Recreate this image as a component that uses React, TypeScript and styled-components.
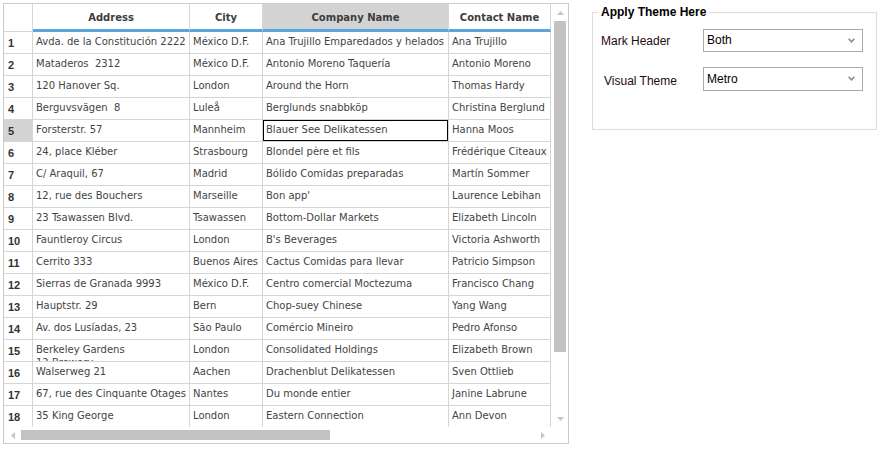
import React from "react";
import styled, { createGlobalStyle, css } from "styled-components";

const GlobalStyle = createGlobalStyle`
  html, body { margin: 0; padding: 0; background: #fff; }
  body { font-family: "DejaVu Sans", Verdana, sans-serif; }
`;

const Page = styled.div`
  display: flex;
  align-items: flex-start;
  gap: 23px;
  padding: 3px 0 0 3px;
  width: 881px;
  height: 449px;
  box-sizing: border-box;
`;

const GridFrame = styled.div`
  display: grid;
  grid-template-columns: 547px 17px;
  grid-template-rows: 423px 16px;
  border: 1px solid #cbcbcb;
  background: #fff;
  flex: none;
`;

const Viewport = styled.div`
  overflow: hidden;
  display: grid;
  grid-template-columns: 29px 157px 73px 186px 102px;
  grid-template-rows: 28px;
  grid-auto-rows: 22px;
  align-content: start;
`;

const line = "#d5d5d5";

const Corner = styled.div`
  box-sizing: border-box;
  border-right: 1px solid ${line};
  border-bottom: 1px solid ${line};
  background: #fff;
`;

const HeaderCell = styled.div<{ $selected?: boolean }>`
  box-sizing: border-box;
  display: flex;
  align-items: center;
  justify-content: center;
  padding-top: 2px;
  border-right: 1px solid ${line};
  border-bottom: 3px solid #5aa6dc;
  background: ${(p) => (p.$selected ? "#d3d3d3" : "#fff")};
  font: bold 10px/12px "DejaVu Sans", Verdana, sans-serif;
  color: #3d3d3d;
  white-space: nowrap;
  overflow: hidden;
`;

const RowHeader = styled.div<{ $selected?: boolean }>`
  box-sizing: border-box;
  border-right: 1px solid ${line};
  border-bottom: 1px solid ${line};
  background: ${(p) => (p.$selected ? "#d3d3d3" : "#fff")};
  padding: 5px 0 0 4px;
  font: bold 11px/13px "Liberation Sans", Arial, sans-serif;
  color: #333;
`;

const Cell = styled.div<{ $active?: boolean; $wrap?: boolean }>`
  box-sizing: border-box;
  border-right: 1px solid ${line};
  border-bottom: 1px solid ${line};
  padding: 3px 3px 0;
  font: 10px/13px "DejaVu Sans", Verdana, sans-serif;
  color: #444;
  overflow: hidden;
  white-space: ${(p) => (p.$wrap ? "pre-wrap" : "pre")};
  ${(p) =>
    p.$active &&
    css`
      box-shadow: inset 0 0 0 1px #000;
    `}
`;

const VScroll = styled.div`
  display: flex;
  flex-direction: column;
  align-items: flex-start;
  padding-left: 3px;
`;

const HScroll = styled.div`
  display: flex;
  align-items: center;
`;

const ArrowBox = styled.div<{ $horizontal?: boolean }>`
  flex: none;
  display: flex;
  align-items: center;
  justify-content: center;
  width: ${(p) => (p.$horizontal ? "17px" : "12px")};
  height: ${(p) => (p.$horizontal ? "16px" : "17px")};
`;

const VThumb = styled.div`
  width: 12px;
  height: 331px;
  background: #c2c2c2;
  flex: none;
`;

const HThumb = styled.div`
  width: 309px;
  height: 10px;
  background: #c2c2c2;
  flex: none;
`;

const Spacer = styled.div`
  flex: 1;
`;

const ScrollCorner = styled.div``;

const Fieldset = styled.fieldset`
  box-sizing: border-box;
  margin: 2px 0 0;
  padding: 0 5px;
  width: 285px;
  height: 125px;
  min-width: 0;
  border: 1px solid #dcdcdc;
  flex: none;
`;

const Legend = styled.legend`
  padding: 0 3px;
  font: bold 12px/14px "Liberation Sans", Arial, sans-serif;
  color: #000;
`;

const Form = styled.div`
  display: grid;
  grid-template-columns: 105px 160px;
  row-gap: 15px;
  align-items: center;
  padding-top: 10px;
`;

const Label = styled.div<{ $indent?: number; $shift?: number }>`
  padding-left: ${(p) => 3 + (p.$indent ?? 0)}px;
  padding-top: ${(p) => p.$shift ?? 0}px;
  font: 12px/14px "Liberation Sans", Arial, sans-serif;
  color: #1e0a10;
`;

const SelectBox = styled.div<{ $height: number }>`
  box-sizing: border-box;
  height: ${(p) => p.$height}px;
  display: flex;
  align-items: center;
  justify-content: space-between;
  padding: 0 7px 1px 3px;
  border: 1px solid #a9a9a9;
  background: #fff;
  font: 12px/14px "Liberation Sans", Arial, sans-serif;
  color: #000;
`;

const Chevron = () => (
  <svg width="7" height="5" viewBox="0 0 7 5">
    <polyline points="0.7,0.8 3.5,3.8 6.3,0.8" fill="none" stroke="#8a8a8a" strokeWidth="1.6" />
  </svg>
);

const Tri = ({ dir }: { dir: "up" | "down" | "left" | "right" }) => {
  const pts = {
    up: "0,4 3.5,0 7,4",
    down: "0,0 7,0 3.5,4",
    left: "4,0 4,7 0,3.5",
    right: "0,0 0,7 4,3.5",
  }[dir];
  const w = dir === "up" || dir === "down" ? 7 : 4;
  const h = dir === "up" || dir === "down" ? 4 : 7;
  return (
    <svg width={w} height={h} viewBox={`0 0 ${w} ${h}`}>
      <polygon points={pts} fill="#c6c6c6" />
    </svg>
  );
};

const columns = ["Address", "City", "Company Name", "Contact Name"];

const rows: [string, string, string, string][] = [
  ["Avda. de la Constitución 2222", "México D.F.", "Ana Trujillo Emparedados y helados", "Ana Trujillo"],
  ["Mataderos  2312", "México D.F.", "Antonio Moreno Taquería", "Antonio Moreno"],
  ["120 Hanover Sq.", "London", "Around the Horn", "Thomas Hardy"],
  ["Berguvsvägen  8", "Luleå", "Berglunds snabbköp", "Christina Berglund"],
  ["Forsterstr. 57", "Mannheim", "Blauer See Delikatessen", "Hanna Moos"],
  ["24, place Kléber", "Strasbourg", "Blondel père et fils", "Frédérique Citeaux"],
  ["C/ Araquil, 67", "Madrid", "Bólido Comidas preparadas", "Martín Sommer"],
  ["12, rue des Bouchers", "Marseille", "Bon app'", "Laurence Lebihan"],
  ["23 Tsawassen Blvd.", "Tsawassen", "Bottom-Dollar Markets", "Elizabeth Lincoln"],
  ["Fauntleroy Circus", "London", "B's Beverages", "Victoria Ashworth"],
  ["Cerrito 333", "Buenos Aires", "Cactus Comidas para llevar", "Patricio Simpson"],
  ["Sierras de Granada 9993", "México D.F.", "Centro comercial Moctezuma", "Francisco Chang"],
  ["Hauptstr. 29", "Bern", "Chop-suey Chinese", "Yang Wang"],
  ["Av. dos Lusíadas, 23", "São Paulo", "Comércio Mineiro", "Pedro Afonso"],
  ["Berkeley Gardens\n12 Brewery", "London", "Consolidated Holdings", "Elizabeth Brown"],
  ["Walserweg 21", "Aachen", "Drachenblut Delikatessen", "Sven Ottlieb"],
  ["67, rue des Cinquante Otages", "Nantes", "Du monde entier", "Janine Labrune"],
  ["35 King George", "London", "Eastern Connection", "Ann Devon"],
];

const selectedRow = 4;
const selectedCol = 2;

export default function App() {
  return (
    <>
      <GlobalStyle />
      <Page>
        <GridFrame>
          <Viewport>
            <Corner />
            {columns.map((c, i) => (
              <HeaderCell key={c} $selected={i === selectedCol}>
                {c}
              </HeaderCell>
            ))}
            {rows.map((r, i) => (
              <React.Fragment key={i}>
                <RowHeader $selected={i === selectedRow}>{i + 1}</RowHeader>
                {r.map((v, j) => (
                  <Cell key={j} $wrap={v.includes("\n")} $active={i === selectedRow && j === selectedCol}>
                    {v}
                  </Cell>
                ))}
              </React.Fragment>
            ))}
          </Viewport>
          <VScroll>
            <ArrowBox>
              <Tri dir="up" />
            </ArrowBox>
            <VThumb />
            <Spacer />
            <ArrowBox>
              <Tri dir="down" />
            </ArrowBox>
          </VScroll>
          <HScroll>
            <ArrowBox $horizontal>
              <Tri dir="left" />
            </ArrowBox>
            <HThumb />
            <Spacer />
            <ArrowBox $horizontal>
              <Tri dir="right" />
            </ArrowBox>
          </HScroll>
          <ScrollCorner />
        </GridFrame>
        <Fieldset>
          <Legend>Apply Theme Here</Legend>
          <Form>
            <Label>Mark Header</Label>
            <SelectBox $height={23}>
              <span>Both</span>
              <Chevron />
            </SelectBox>
            <Label $indent={3} $shift={3}>
              Visual Theme
            </Label>
            <SelectBox $height={24}>
              <span>Metro</span>
              <Chevron />
            </SelectBox>
          </Form>
        </Fieldset>
      </Page>
    </>
  );
}
